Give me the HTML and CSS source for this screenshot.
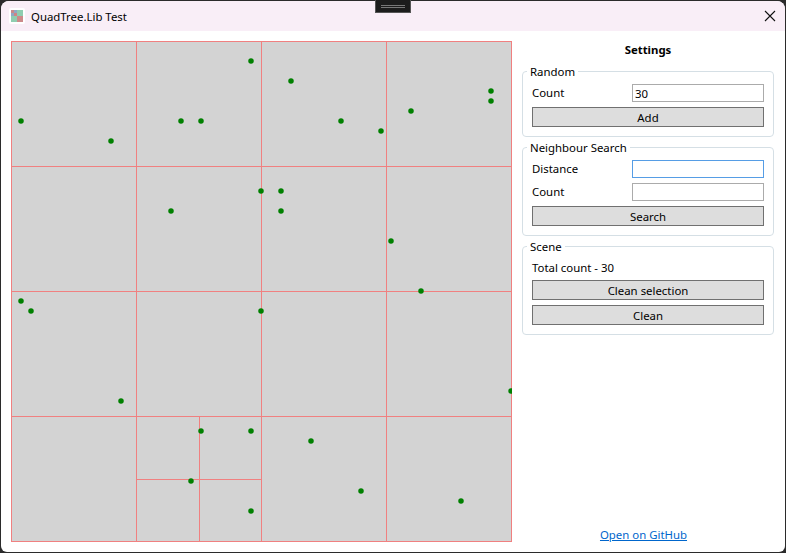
FILE: index.html
```html
<!DOCTYPE html>
<html lang="en">
<head>
    <meta charset="UTF-8">
    <meta name="viewport" content="width=device-width, initial-scale=1.0">
    <title>QuadTree.Lib Test</title>
    <link rel="stylesheet" href="styles.css">
</head>
<body>
    <div class="handle"><span></span><span></span></div>

    <div class="window">
        <header class="titlebar">
            <svg class="app-icon" width="16" height="16" viewBox="0 0 16 16">
                <rect x="0" y="0" width="16" height="16" rx="2" fill="#ffffff"/>
                <rect x="2" y="2" width="12" height="12" fill="#8fcdb0"/>
                <rect x="2" y="2" width="3" height="3" fill="#c98a8a"/>
                <rect x="5" y="2" width="3" height="3" fill="#8fa8c4"/>
                <rect x="2" y="5" width="3" height="3" fill="#8fa8c4"/>
                <rect x="5" y="5" width="3" height="3" fill="#d08484"/>
                <rect x="8" y="8" width="6" height="6" fill="#cc8a8a"/>
            </svg>
            <span class="app-title">QuadTree.Lib Test</span>
            <svg class="close-icon" width="12" height="12" viewBox="0 0 12 12">
                <path d="M1 1 L11 11 M11 1 L1 11" stroke="#111111" stroke-width="1.1" fill="none"/>
            </svg>
        </header>

        <main class="content">
            <!-- quadtree scene, coordinates are canvas pixels -->
            <svg class="scene" width="501" height="501" viewBox="0 0 501 501">
                <rect x="0" y="0" width="501" height="501" fill="#d3d3d3"/>
                <g stroke="#f08080" stroke-width="1" fill="none">
                    <rect x="0.5" y="0.5" width="500" height="500"/>
                    <path d="M125.5 0 V501 M250.5 0 V501 M375.5 0 V501"/>
                    <path d="M0 125.5 H501 M0 250.5 H501 M0 375.5 H501"/>
                    <path d="M188.5 375 V501 M125 438.5 H250"/>
                </g>
                <g id="points" fill="#008000"></g>
            </svg>

            <aside class="settings">
                <h2 class="settings-title">Settings</h2>

                <fieldset class="group">
                    <legend>Random</legend>
                    <div class="field">
                        <label>Count</label>
                        <input type="text" value="30">
                    </div>
                    <button>Add</button>
                </fieldset>

                <fieldset class="group">
                    <legend>Neighbour Search</legend>
                    <div class="field">
                        <label>Distance</label>
                        <input class="focused" type="text">
                    </div>
                    <div class="field">
                        <label>Count</label>
                        <input type="text">
                    </div>
                    <button>Search</button>
                </fieldset>

                <fieldset class="group">
                    <legend>Scene</legend>
                    <div class="total">Total count - 30</div>
                    <button>Clean selection</button>
                    <button>Clean</button>
                </fieldset>

                <a class="github" href="#">Open on GitHub</a>
            </aside>
        </main>
    </div>

    <script>
        const points = [
            [240, 20], [280, 40], [480, 50], [480, 60], [10, 80], [170, 80], [190, 80],
            [330, 80], [400, 70], [370, 90], [100, 100], [250, 150], [270, 150], [270, 170],
            [160, 170], [380, 200], [410, 250], [10, 260], [20, 270], [250, 270], [110, 360],
            [500, 350], [190, 390], [240, 390], [300, 400], [180, 440], [350, 450], [450, 460],
            [240, 470]
        ];
        const group = document.getElementById('points');
        points.forEach(p => {
            const dot = document.createElementNS('http://www.w3.org/2000/svg', 'circle');
            dot.setAttribute('cx', p[0]);
            dot.setAttribute('cy', p[1]);
            dot.setAttribute('r', 2.75);
            group.appendChild(dot);
        });
    </script>
</body>
</html>
```

FILE: styles.css
```css
body {
    margin: 0;
    height: 553px;
    overflow: hidden;
    background-color: #2b2b2b;
    font-family: "Noto Sans", "Open Sans", sans-serif;
    font-size: 11.4px;
    color: #000;
}
.window {
    display: flex;
    flex-direction: column;
    height: 551px;
    margin: 1px 1px 1px 1px;
    background-color: white;
    border-radius: 8px 8px 6px 6px;
    overflow: hidden;
}
.titlebar {
    display: flex;
    align-items: center;
    height: 30px;
    flex-shrink: 0;
    padding: 0 8px;
    background-color: #f9eef7;
}
.app-icon {
    margin-right: 6px;
}
.app-title {
    flex: 1;
}
.close-icon {
    margin-right: 1px;
}
.handle {
    position: absolute;
    top: 0;
    left: 375px;
    z-index: 2;
    box-sizing: border-box;
    width: 36px;
    height: 13px;
    padding-top: 5px;
    background-color: #1c1c1c;
    border: 1px solid #555;
    border-top: none;
}
.handle span {
    display: block;
    width: 24px;
    height: 1px;
    margin: 0 auto 1px;
    background-color: #777;
}
.content {
    display: flex;
    flex: 1;
    padding: 10px 11px 9px 10px;
    gap: 10px;
}
.scene {
    display: block;
    flex-shrink: 0;
}
.settings {
    display: flex;
    flex-direction: column;
    flex: 1;
    min-width: 0;
}
.settings-title {
    margin: 0 0 5px;
    font-size: 11.4px;
    line-height: 17px;
    font-weight: bold;
    text-align: center;
}
.group {
    display: flex;
    flex-direction: column;
    margin: 0 0 2px;
    padding: 4px 9px 9px;
    border: 1px solid #d5dfe5;
    border-radius: 4px;
    min-width: 0;
}
.group legend {
    padding: 1px 3px 0;
    margin-left: -5px;
    line-height: 16px;
}
.field {
    display: flex;
    align-items: center;
    margin-bottom: 5px;
}
.field label {
    width: 100px;
    flex-shrink: 0;
    line-height: 16px;
    padding-bottom: 1px;
}
.field input {
    flex: 1;
    min-width: 0;
    box-sizing: border-box;
    height: 18px;
    padding: 0 2px;
    border: 1px solid #ababab;
    font: inherit;
    outline: none;
}
.field input.focused {
    border-color: #569de5;
}
.group button {
    height: 20px;
    padding: 0;
    background-color: #dddddd;
    border: 1px solid #707070;
    font: inherit;
    color: #000;
}
.group button + button {
    margin-top: 5px;
}
.total {
    line-height: 16px;
    margin: 1px 0 4px;
}
.github {
    margin-top: auto;
    padding-right: 9px;
    text-align: center;
    color: #0066cc;
    line-height: 16px;
}
```
